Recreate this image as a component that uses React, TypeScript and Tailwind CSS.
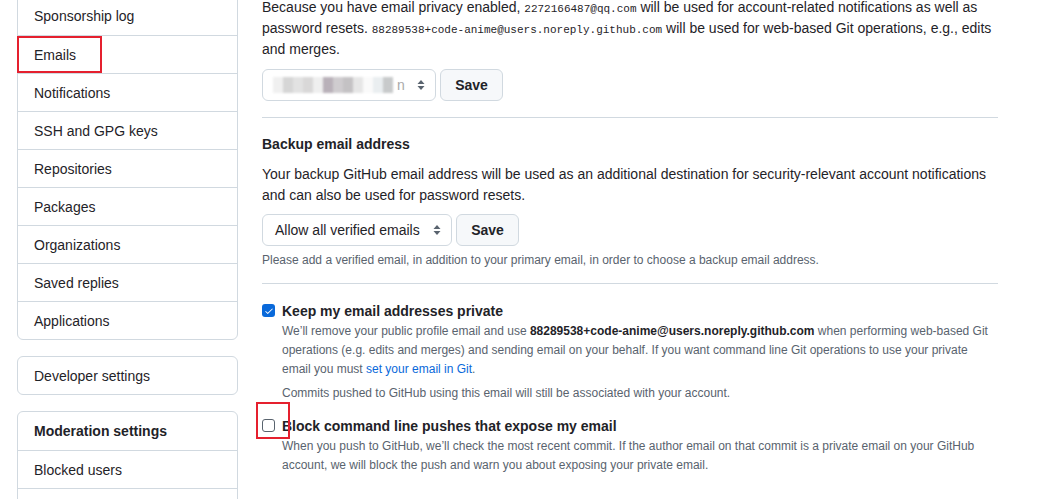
import React from "react";

const sideItems = [
  "Sponsorship log",
  "Emails",
  "Notifications",
  "SSH and GPG keys",
  "Repositories",
  "Packages",
  "Organizations",
  "Saved replies",
  "Applications",
];

const SelectArrows = () => (
  <svg width="8" height="12" viewBox="0 0 8 12" className="text-[#59636e]">
    <path d="M4 1 L7.5 5 H0.5 Z" fill="currentColor" />
    <path d="M4 11 L7.5 7 H0.5 Z" fill="currentColor" />
  </svg>
);

const mosaic = ["#f0f0f0", "#d6d6d6", "#e2e2e2", "#d9d8d8", "#efefef", "#b9b1b9", "#cfcccf", "#c4c2c4", "#e6e6e6", "#fafafa", "#eaeef0", "#c8cacb"];

const App: React.FC = () => {
  return (
    <div className="min-h-screen overflow-hidden bg-white font-['Liberation_Sans',Arial,sans-serif] text-sm text-[#1f2328]">
      <div className="-mt-[3px] flex items-start gap-[24px] pl-[17px]">
        {/* sidebar */}
        <aside className="-mt-px w-[221px] shrink-0">
          <nav className="rounded-b-md border border-[#d1d9e0]">
            {sideItems.map((item, i) => (
              <div key={item} className={"relative flex h-[38px] items-center px-4 leading-5 " + (i > 0 ? "border-t border-[#d1d9e0]" : "")}>
                {item}
                {item === "Emails" && (
                  <span className="absolute -left-px top-0 h-[37px] w-[85px] border-2 border-[#e5202e]" />
                )}
              </div>
            ))}
          </nav>

          <div className="mt-[16px] flex h-[39px] items-center rounded-md border border-[#d1d9e0] px-4">Developer settings</div>

          <div className="mt-[16px] rounded-t-md border border-[#d1d9e0]">
            <div className="flex h-[38px] items-center px-4 font-semibold">Moderation settings</div>
            <div className="flex h-[38px] items-center border-t border-[#d1d9e0] px-4">Blocked users</div>
            <div className="h-[38px] border-t border-[#d1d9e0]" />
          </div>
        </aside>

        {/* main */}
        <main className="w-[736px] leading-[21px]">
          <p>
            Because you have email privacy enabled, <code className="font-['Liberation_Mono',monospace] text-[11px] leading-none">2272166487@qq.com</code> will be used for account-related notifications as well as
            password resets. <code className="font-['Liberation_Mono',monospace] text-[11px] leading-none">88289538+code-anime@users.noreply.github.com</code> will be used for web-based Git operations, e.g., edits
            and merges.
          </p>

          <div className="mt-[9px] flex gap-[4px]">
            <div className="flex h-[32px] w-[174px] items-center justify-between rounded-md border border-[#d1d9e0] pl-[10px] pr-[10px]">
              <div className="flex items-center">
                <div className="flex h-[16px] blur-[1px]">
                  {mosaic.map((c, i) => (
                    <span key={i} className="h-full w-[10px]" style={{ backgroundColor: c }} />
                  ))}
                </div>
                <span className="ml-[4px] text-[#aaa]">n</span>
              </div>
              <SelectArrows />
            </div>
            <button className="h-[32px] w-[63px] rounded-md border border-[#d1d9e0] bg-[#f6f8fa] font-semibold">Save</button>
          </div>

          <div className="mt-[16px] border-t border-[#d1d9e0]" />

          <h3 className="mt-[16px] font-semibold">Backup email address</h3>
          <p className="mt-[9px]">
            Your backup GitHub email address will be used as an additional destination for security-relevant account notifications
            and can also be used for password resets.
          </p>

          <div className="mt-[8px] flex gap-[4px]">
            <div className="flex h-[32px] w-[190px] items-center justify-between rounded-md border border-[#d1d9e0] pl-[12px] pr-[10px]">
              <span>Allow all verified emails</span>
              <SelectArrows />
            </div>
            <button className="h-[32px] w-[63px] rounded-md border border-[#d1d9e0] bg-[#f6f8fa] font-semibold">Save</button>
          </div>
          <p className="mt-[5px] text-xs leading-[18px] text-[#59636e]">
            Please add a verified email, in addition to your primary email, in order to choose a backup email address.
          </p>

          <div className="mt-[14px] border-t border-[#d1d9e0]" />

          <div className="mt-[17px] flex gap-[7px]">
            <div className="pt-[3px]">
              <span className="flex h-[13px] w-[13px] items-center justify-center rounded-[3px] bg-[#0969da]">
                <svg width="10" height="10" viewBox="0 0 16 16" fill="white">
                  <path d="M13.78 4.22a.75.75 0 0 1 0 1.06l-7.25 7.25a.75.75 0 0 1-1.06 0L2.22 9.28a.75.75 0 0 1 1.06-1.06L6 10.94l6.72-6.72a.75.75 0 0 1 1.06 0Z" />
                </svg>
              </span>
            </div>
            <div>
              <div className="font-semibold leading-5">Keep my email addresses private</div>
              <p className="mt-px text-xs leading-[19px] text-[#59636e]">
                We’ll remove your public profile email and use <b className="font-semibold text-[#1f2328]">88289538+code-anime@users.noreply.github.com</b> when performing web-based Git
                operations (e.g. edits and merges) and sending email on your behalf. If you want command line Git operations to use your private
                email you must <a className="text-[#0969da]">set your email in Git</a>.
              </p>
              <p className="mt-[5px] text-xs leading-[19px] text-[#59636e]">
                Commits pushed to GitHub using this email will still be associated with your account.
              </p>
            </div>
          </div>

          <div className="relative mt-[13px] flex gap-[7px]">
            <span className="absolute -left-[6px] -top-[14px] h-[37px] w-[34px] border-2 border-[#e5202e]" />
            <div className="pt-[3px]">
              <span className="block h-[13px] w-[13px] rounded-[3px] border border-[#59636e] bg-white" />
            </div>
            <div>
              <div className="font-semibold leading-5">Block command line pushes that expose my email</div>
              <p className="mt-px text-xs leading-[19px] text-[#59636e]">
                When you push to GitHub, we’ll check the most recent commit. If the author email on that commit is a private email on your GitHub
                account, we will block the push and warn you about exposing your private email.
              </p>
            </div>
          </div>
        </main>
      </div>
    </div>
  );
};

export default App;
